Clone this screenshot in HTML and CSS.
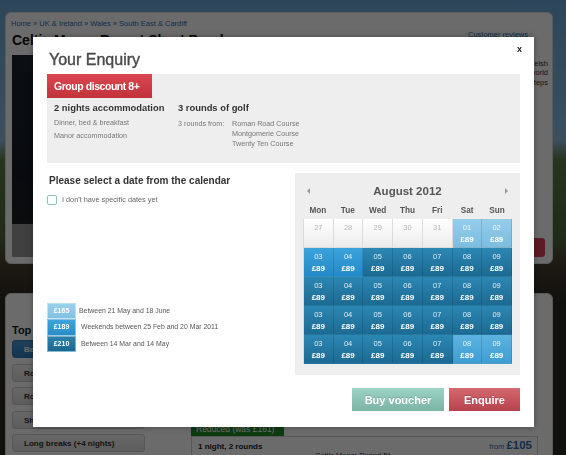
FILE: index.html
```html
<!DOCTYPE html>
<html>
<head>
<meta charset="utf-8">
<title>Your Enquiry</title>
<link rel="stylesheet" href="styles.css">
</head>
<body>
<div class="page">
  <div class="card card-top">
    <div class="crumbs">Home » UK &amp; Ireland » Wales » South East &amp; Cardiff</div>
    <div class="card-head">
      <h1 class="page-title">Celtic Manor Resort Short Breaks</h1>
      <a class="reviews">Customer reviews</a>
    </div>
    <div class="card-body">
      <div class="photo"><div class="thumbs"></div></div>
      <div class="intro">
        <p class="intro-text">Set in the heart of the Welsh<br>countryside, a golfing world<br>that is just a few steps</p>
        <span class="book-btn"></span>
      </div>
    </div>
  </div>
  <div class="card card-bottom">
    <aside class="side">
      <h2 class="side-title">Top sellers</h2>
      <div class="side-tab active">Best sellers</div>
      <div class="side-tab">Rounds &amp; stay</div>
      <div class="side-tab">Rounds only</div>
      <div class="side-tab">Short breaks (1-3 nights)</div>
      <div class="side-tab">Long breaks (+4 nights)</div>
    </aside>
    <section class="results">
      <div class="badge">Reduced (was £161)</div>
      <div class="result">
        <div class="result-row">
          <span class="result-name">1 night, 2 rounds</span>
          <span class="result-price">from <b>£105</b></span>
        </div>
        <div class="result-hotel">Celtic Manor Resort 5*</div>
      </div>
    </section>
  </div>
</div>

<div class="overlay"></div>

<div class="modal">
  <a class="close">x</a>
  <h1 class="modal-title">Your Enquiry</h1>
  <div class="summary">
    <div class="summary-tab">Group discount 8+</div>
    <div class="summary-cols">
      <div class="col col-acc">
        <h3 class="col-title">2 nights accommodation</h3>
        <p class="col-line">Dinner, bed &amp; breakfast</p>
        <p class="col-line col-line-2">Manor accommodation</p>
      </div>
      <div class="col">
        <h3 class="col-title">3 rounds of golf</h3>
        <div class="rounds">
          <span class="rounds-label">3 rounds from:</span>
          <ul class="rounds-list">
            <li>Roman Road Course</li>
            <li>Montgomerie Course</li>
            <li>Twenty Ten Course</li>
          </ul>
        </div>
      </div>
    </div>
  </div>

  <div class="booking">
    <div class="booking-left">
      <h3 class="select-title">Please select a date from the calendar</h3>
      <label class="check"><span class="check-box"></span>I don't have specific dates yet</label>
      <ul class="legend">
        <li class="legend-row"><span class="swatch sw-lo">£165</span><span class="legend-text">Between 21 May and 18 June</span></li>
        <li class="legend-row"><span class="swatch sw-mid">£189</span><span class="legend-text legend-text-2">Weekends between 25 Feb and 20 Mar 2011</span></li>
        <li class="legend-row"><span class="swatch sw-hi">£210</span><span class="legend-text legend-text-2">Between 14 Mar and 14 May</span></li>
      </ul>
    </div>

    <div class="calendar">
      <div class="cal-head">
        <span class="arrow arrow-left"></span>
        <span class="cal-month">August 2012</span>
        <span class="arrow arrow-right"></span>
      </div>
      <div class="cal-days">
        <span>Mon</span><span>Tue</span><span>Wed</span><span>Thu</span><span>Fri</span><span>Sat</span><span>Sun</span>
      </div>
      <div class="cal-grid">
        <div class="d off"><span class="n">27</span></div>
        <div class="d off"><span class="n">28</span></div>
        <div class="d off"><span class="n">29</span></div>
        <div class="d off"><span class="n">30</span></div>
        <div class="d off"><span class="n">31</span></div>
        <div class="d lo"><span class="n">01</span><span class="p">£89</span></div>
        <div class="d lo"><span class="n">02</span><span class="p">£89</span></div>

        <div class="d mid"><span class="n">03</span><span class="p">£89</span></div>
        <div class="d mid"><span class="n">04</span><span class="p">£89</span></div>
        <div class="d hi"><span class="n">05</span><span class="p">£89</span></div>
        <div class="d hi"><span class="n">06</span><span class="p">£89</span></div>
        <div class="d hi"><span class="n">07</span><span class="p">£89</span></div>
        <div class="d hi"><span class="n">08</span><span class="p">£89</span></div>
        <div class="d hi"><span class="n">09</span><span class="p">£89</span></div>

        <div class="d hi"><span class="n">03</span><span class="p">£89</span></div>
        <div class="d hi"><span class="n">04</span><span class="p">£89</span></div>
        <div class="d hi"><span class="n">05</span><span class="p">£89</span></div>
        <div class="d hi"><span class="n">06</span><span class="p">£89</span></div>
        <div class="d hi"><span class="n">07</span><span class="p">£89</span></div>
        <div class="d hi"><span class="n">08</span><span class="p">£89</span></div>
        <div class="d hi"><span class="n">09</span><span class="p">£89</span></div>

        <div class="d hi"><span class="n">03</span><span class="p">£89</span></div>
        <div class="d hi"><span class="n">04</span><span class="p">£89</span></div>
        <div class="d hi"><span class="n">05</span><span class="p">£89</span></div>
        <div class="d hi"><span class="n">06</span><span class="p">£89</span></div>
        <div class="d hi"><span class="n">07</span><span class="p">£89</span></div>
        <div class="d hi"><span class="n">08</span><span class="p">£89</span></div>
        <div class="d hi"><span class="n">09</span><span class="p">£89</span></div>

        <div class="d hi"><span class="n">03</span><span class="p">£89</span></div>
        <div class="d hi"><span class="n">04</span><span class="p">£89</span></div>
        <div class="d hi"><span class="n">05</span><span class="p">£89</span></div>
        <div class="d hi"><span class="n">06</span><span class="p">£89</span></div>
        <div class="d hi"><span class="n">07</span><span class="p">£89</span></div>
        <div class="d lo2"><span class="n">08</span><span class="p">£89</span></div>
        <div class="d lo2"><span class="n">09</span><span class="p">£89</span></div>
      </div>
    </div>
  </div>

  <div class="actions">
    <button class="btn btn-voucher">Buy voucher</button>
    <button class="btn btn-enquire">Enquire</button>
  </div>
</div>
</body>
</html>
```
FILE: styles.css
```css
* { box-sizing: border-box; margin: 0; padding: 0; }
ul { list-style: none; }

body {
  width: 566px;
  height: 455px;
  overflow: hidden;
  position: relative;
  font-family: "Liberation Sans", Arial, sans-serif;
  background: linear-gradient(180deg, #6ea8d8 0, #8cbce0 140px, #5f7d45 160px, #4b663a 240px, #4a4032 262px, #2c2a22 300px, #2a2a22 100%);
}

/* ---------- page behind the dialog ---------- */
.page { padding: 12px 13px 0 5px; }

.card {
  background: #fff;
  border: 1px solid #d8d8d8;
  border-radius: 6px;
}

.card-top {
  height: 252px;
  padding: 6px 24px 6px 6px;
  display: flex;
  flex-direction: column;
}

.crumbs {
  font-size: 7.5px;
  line-height: 10px;
  color: #2a6db5;
  margin-left: -1px;
}

.card-head {
  display: flex;
  justify-content: space-between;
  align-items: flex-start;
  margin-top: 3px;
}

.page-title {
  font-size: 14px;
  line-height: 16px;
  font-weight: bold;
  color: #111;
}

.reviews {
  font-size: 7.5px;
  line-height: 10px;
  margin-top: -2px;
  color: #2a6db5;
  text-decoration: underline;
}

.card-body {
  flex: 1;
  display: flex;
  margin-top: 7px;
}

.photo {
  width: 300px;
  background: linear-gradient(180deg, #1c2430 0, #141a24 60%, #222 100%);
  display: flex;
  flex-direction: column;
  justify-content: flex-end;
}

.thumbs {
  height: 33px;
  background: #9a9a9a;
}

.intro {
  flex: 1;
  margin-right: -17px;
  display: flex;
  flex-direction: column;
  align-items: flex-end;
  justify-content: space-between;
}

.intro-text {
  margin-top: 3.5px;
  font-size: 7.5px;
  line-height: 9.5px;
  color: #333;
  text-align: right;
  margin-right: -3px;
}

.book-btn {
  width: 70px;
  height: 19px;
  border-radius: 3px;
  background: #e0405a;
}

.card-bottom {
  margin-top: 29px;
  height: 200px;
  padding: 29px 0 0 6px;
  display: flex;
}

.side { width: 133px; }

.side-title {
  font-size: 11px;
  line-height: 14px;
  font-weight: bold;
  color: #222;
  white-space: nowrap;
}

.side-tab {
  height: 18px;
  margin-top: 5.5px;
  padding-left: 11px;
  font-size: 8px;
  line-height: 17px;
  font-weight: bold;
  color: #333;
  background: linear-gradient(180deg, #f6f6f6, #dedede);
  border: 1px solid #cfcfcf;
  border-radius: 3px;
  white-space: nowrap;
}

.side-tab.active {
  margin-top: 3px;
  background: linear-gradient(180deg, #4a9ad6, #2f7dbd);
  border-color: #2f7dbd;
  color: #fff;
}

.results {
  width: 347px;
  margin-left: 46px;
  padding-top: 99px;
}

.badge {
  width: 93px;
  height: 14px;
  padding-left: 5px;
  background: #218c26;
  color: #fff;
  font-size: 8.5px;
  line-height: 14px;
  white-space: nowrap;
}

.result {
  border: 1px solid #cfcfcf;
  height: 40px;
  padding: 3px 5px 0 6px;
}

.result-row {
  display: flex;
  justify-content: space-between;
  align-items: baseline;
  line-height: 10px;
}

.result-name {
  font-size: 8px;
  font-weight: bold;
  color: #222;
}

.result-price {
  font-size: 7.5px;
  color: #2a6db5;
}

.result-price b { font-size: 11.5px; }

.result-hotel {
  margin-left: 117px;
  font-size: 7.5px;
  line-height: 8px;
  color: #333;
}

/* ---------- overlay + dialog ---------- */
.overlay {
  position: fixed;
  inset: 0;
  background: rgba(0, 0, 0, 0.58);
}

.modal {
  position: absolute;
  left: 33px;
  top: 37px;
  width: 501px;
  height: 390px;
  background: #fff;
  padding: 13px 14px 0 14px;
  box-shadow: 0 0 6px rgba(0, 0, 0, 0.35);
}

.close {
  position: absolute;
  top: 7px;
  right: 12px;
  font-size: 9px;
  line-height: 10px;
  font-weight: bold;
  color: #222;
}

.modal-title {
  margin-left: 2px;
  font-size: 16px;
  line-height: 20px;
  font-weight: normal;
  color: #4a4a4a;
  -webkit-text-stroke: 0.4px #4a4a4a;
}

.summary {
  margin-top: 4px;
  height: 89px;
  background: #eee;
}

.summary-tab {
  width: 105px;
  height: 24px;
  padding-left: 7px;
  background: linear-gradient(180deg, #da4650, #c2333c);
  color: #fff;
  font-size: 10.5px;
  font-weight: bold;
  letter-spacing: -0.45px;
  line-height: 24px;
  white-space: nowrap;
}

.summary-cols {
  display: flex;
  padding: 4px 0 0 7px;
}

.col-acc { width: 124px; }

.col-title {
  font-size: 9.4px;
  line-height: 12px;
  font-weight: bold;
  color: #333;
  white-space: nowrap;
}

.col-line {
  margin-top: 4px;
  font-size: 7.2px;
  line-height: 10px;
  color: #777;
}

.col-line-2 { margin-top: 3px; }

.rounds {
  display: flex;
  margin-top: 5px;
  font-size: 7.2px;
  line-height: 10px;
  color: #777;
}

.rounds-label { width: 54px; }

/* ---------- booking area ---------- */
.booking {
  display: flex;
  margin-top: 10px;
}

.booking-left { width: 248px; }

.select-title {
  padding-top: 2px;
  margin-left: 2px;
  font-size: 10px;
  line-height: 12px;
  font-weight: bold;
  color: #333;
}

.check {
  display: flex;
  align-items: center;
  margin-top: 8px;
  font-size: 7.3px;
  line-height: 10px;
  color: #666;
}

.check-box {
  width: 10px;
  height: 10px;
  margin-right: 5px;
  border: 1px solid #8bc7b7;
  border-radius: 2px;
  background: #fff;
}

.legend { margin-top: 98px; }

.legend-row {
  display: flex;
  align-items: center;
  height: 16.33px;
}

.swatch {
  flex: none;
  width: 29px;
  height: 100%;
  border: 1px solid rgba(255, 255, 255, 0.45);
  color: #fff;
  font-size: 7px;
  font-weight: bold;
  text-align: center;
  line-height: 14px;
}

.sw-lo { background: linear-gradient(180deg, #9ad1ec, #80c0e2); }
.sw-mid { background: linear-gradient(180deg, #3ea4da, #2a8cc8); }
.sw-hi { background: linear-gradient(180deg, #2a82ae, #1c6890); }

.legend-text {
  margin-left: 3px;
  font-size: 6.9px;
  line-height: 10px;
  color: #555;
  white-space: nowrap;
}

.legend-text-2 { margin-left: 5px; }

/* ---------- calendar ---------- */
.calendar {
  width: 225px;
  height: 202px;
  background: #eee;
  padding: 10.5px 8px 0 8px;
}

.cal-head {
  display: flex;
  align-items: center;
  justify-content: space-between;
  height: 14px;
  padding: 0 4px;
}

.cal-month {
  font-size: 11.5px;
  line-height: 14px;
  font-weight: bold;
  color: #555;
}

.arrow {
  width: 0;
  height: 0;
  border-top: 3px solid transparent;
  border-bottom: 3px solid transparent;
}

.arrow-left { border-right: 3px solid #999; }
.arrow-right { border-left: 3px solid #999; }

.cal-days {
  display: grid;
  grid-template-columns: repeat(7, 1fr);
  margin-top: 7.5px;
  font-size: 8.2px;
  line-height: 12px;
  font-weight: bold;
  color: #555;
  text-align: center;
}

.cal-grid {
  display: grid;
  grid-template-columns: repeat(7, 1fr);
  grid-auto-rows: 29px;
  margin-top: 2px;
  border-left: 1px solid rgba(0, 0, 0, 0.08);
}

.d {
  display: flex;
  flex-direction: column;
  align-items: center;
  padding-top: 4px;
  border-right: 1px solid rgba(0, 0, 0, 0.12);
  border-bottom: 1px solid rgba(0, 0, 0, 0.12);
  color: #fff;
}

.n {
  font-size: 7.5px;
  line-height: 9px;
  opacity: 0.85;
}

.p {
  margin-top: 2.5px;
  font-size: 8px;
  line-height: 10px;
  font-weight: bold;
}

.off {
  background: linear-gradient(180deg, #fff, #ececec);
  border-color: #dcdcdc;
  color: #aaa;
}

.lo { background: linear-gradient(180deg, #95cdea, #7bbde0); }
.lo2 { background: linear-gradient(180deg, #5db3e0, #3d9dd3); }
.mid { background: linear-gradient(180deg, #3ca2da, #238ac9); }
.hi { background: linear-gradient(180deg, #2c87b3, #1c6a93); }

/* ---------- actions ---------- */
.actions {
  display: flex;
  justify-content: flex-end;
  gap: 5px;
  margin-top: 13px;
}

.btn {
  height: 23px;
  border: 0;
  font-family: "Liberation Sans", Arial, sans-serif;
  font-size: 11px;
  font-weight: bold;
  color: #fff;
  text-shadow: 0 -1px 0 rgba(0, 0, 0, 0.15);
}

.btn-voucher {
  width: 92px;
  background: linear-gradient(180deg, #9dd3c4, #7ab4a4);
}

.btn-enquire {
  width: 71px;
  background: linear-gradient(180deg, #d4696f, #b5434d);
}
```
